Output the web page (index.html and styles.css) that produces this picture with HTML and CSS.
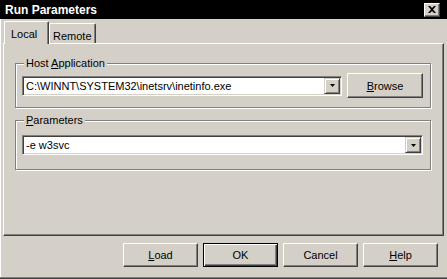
FILE: index.html
```html
<!DOCTYPE html>
<html lang="en">
<head>
    <meta charset="UTF-8">
    <title>Run Parameters</title>
    <link rel="stylesheet" href="styles.css">
</head>
<body>
    <div class="window">
        <div class="titlebar">
            <span class="title">Run Parameters</span>
            <button class="close-btn">
                <svg width="8" height="7" viewBox="0 0 8 7"><path d="M0 0h2l2 2 2-2h2L5 3.5 8 7H6L4 5 2 7H0l3-3.5z" fill="#000"/></svg>
            </button>
        </div>

        <div class="tabs">
            <div class="tab active">Local</div>
            <div class="tab">Remote</div>
        </div>

        <div class="panel">
            <div class="group">
                <div class="group-label">Host <u>A</u>pplication</div>
                <div class="field-row">
                    <div class="combo">
                        <span class="combo-text">C:\WINNT\SYSTEM32\inetsrv\inetinfo.exe</span>
                        <span class="combo-arrow"><svg width="5" height="3" viewBox="0 0 5 3"><path d="M0 0h5L2.5 3z" fill="#000"/></svg></span>
                    </div>
                    <button class="btn browse"><u>B</u>rowse</button>
                </div>
            </div>

            <div class="group params">
                <div class="group-label"><u>P</u>arameters</div>
                <div class="combo">
                    <span class="combo-text">-e w3svc</span>
                    <span class="combo-arrow"><svg width="5" height="3" viewBox="0 0 5 3"><path d="M0 0h5L2.5 3z" fill="#000"/></svg></span>
                </div>
            </div>
        </div>

        <div class="buttons">
            <button class="btn"><u>L</u>oad</button>
            <button class="btn default">OK</button>
            <button class="btn">Cancel</button>
            <button class="btn"><u>H</u>elp</button>
        </div>
    </div>
</body>
</html>
```

FILE: styles.css
```css
* {
    box-sizing: border-box;
}

body {
    margin: 0;
    background-color: #d4d0c8;
    font-family: "Liberation Sans", Arial, sans-serif;
    font-size: 11px;
    color: #000;
}

.window {
    width: 447px;
    height: 279px;
    background-color: #d4d0c8;
    border-bottom: 1px solid #404040;
    box-shadow: inset 0 -1px 0 #808080, inset 1px 0 0 #fff;
    overflow: hidden;
}

.titlebar {
    height: 19px;
    background-color: #000;
    display: flex;
    align-items: center;
    justify-content: space-between;
    padding: 0 7px 0 5px;
}

.title {
    color: #fff;
    font-weight: bold;
    font-size: 12px;
}

.close-btn {
    width: 16px;
    height: 14px;
    padding: 0;
    background-color: #d4d0c8;
    border: 1px solid;
    border-color: #fff #404040 #404040 #fff;
    box-shadow: inset -1px -1px 0 #808080;
    display: flex;
    align-items: center;
    justify-content: center;
}

/* tab strip */
.tabs {
    display: flex;
    align-items: flex-end;
    height: 24px;
    padding-left: 4px;
}

.tab {
    height: 20px;
    padding: 6px 3px 0 3px;
    line-height: 13px;
    border: 1px solid;
    border-bottom: none;
    border-color: #fff #404040 #404040 #fff;
    border-radius: 2px 2px 0 0;
    box-shadow: inset -1px 0 0 #808080;
    background-color: #d4d0c8;
}

.tab.active {
    position: relative;
    z-index: 1;
    width: 45px;
    height: 23px;
    margin-bottom: -1px;
    padding-left: 6px;
}

.panel {
    margin: 0 3px;
    height: 193px;
    border: 1px solid;
    border-color: #fff #404040 #404040 #fff;
    box-shadow: inset -1px -1px 0 #808080;
    padding: 0 12px 0 11px;
    overflow: hidden;
}

/* group boxes */
.group {
    margin-top: 19px;
    padding: 0 7px 9px 6px;
    border: 1px solid #808080;
    box-shadow: inset 1px 1px 0 #fff, 1px 1px 0 #fff;
}

.group.params {
    margin-top: 12px;
    padding-bottom: 14px;
}

.group-label {
    width: fit-content;
    margin: -7px 0 0 2px;
    padding: 0 2px;
    line-height: 13px;
    background-color: #d4d0c8;
}

.field-row {
    display: flex;
    align-items: center;
    gap: 5px;
    margin-top: 3px;
}

.params .combo {
    margin-top: 8px;
}

.combo {
    flex: 1;
    display: flex;
    align-items: center;
    height: 20px;
    padding: 1px;
    background-color: #fff;
    border: 1px solid;
    border-color: #808080 #fff #fff #808080;
    box-shadow: inset 1px 1px 0 #404040, inset -1px -1px 0 #d4d0c8;
}

.combo-text {
    flex: 1;
    padding-left: 2px;
    line-height: 16px;
    white-space: nowrap;
    overflow: hidden;
}

.combo-arrow {
    width: 16px;
    height: 16px;
    display: flex;
    align-items: center;
    justify-content: center;
    background-color: #d4d0c8;
    border: 1px solid;
    border-color: #d4d0c8 #404040 #404040 #d4d0c8;
    box-shadow: inset 1px 1px 0 #fff, inset -1px -1px 0 #808080;
}

/* push buttons */
.btn {
    width: 75px;
    height: 24px;
    padding: 0;
    font: inherit;
    color: #000;
    background-color: #d4d0c8;
    border: 1px solid;
    border-color: #fff #404040 #404040 #fff;
    box-shadow: inset -1px -1px 0 #808080;
}

.btn.browse {
    width: 76px;
    height: 25px;
}

.btn.default {
    border-color: #000;
    box-shadow: inset 1px 1px 0 #fff, inset -1px -1px 0 #404040, inset -2px -2px 0 #808080;
}

.buttons {
    display: flex;
    justify-content: flex-end;
    gap: 5px;
    padding: 7px 9px 0 0;
}
```
